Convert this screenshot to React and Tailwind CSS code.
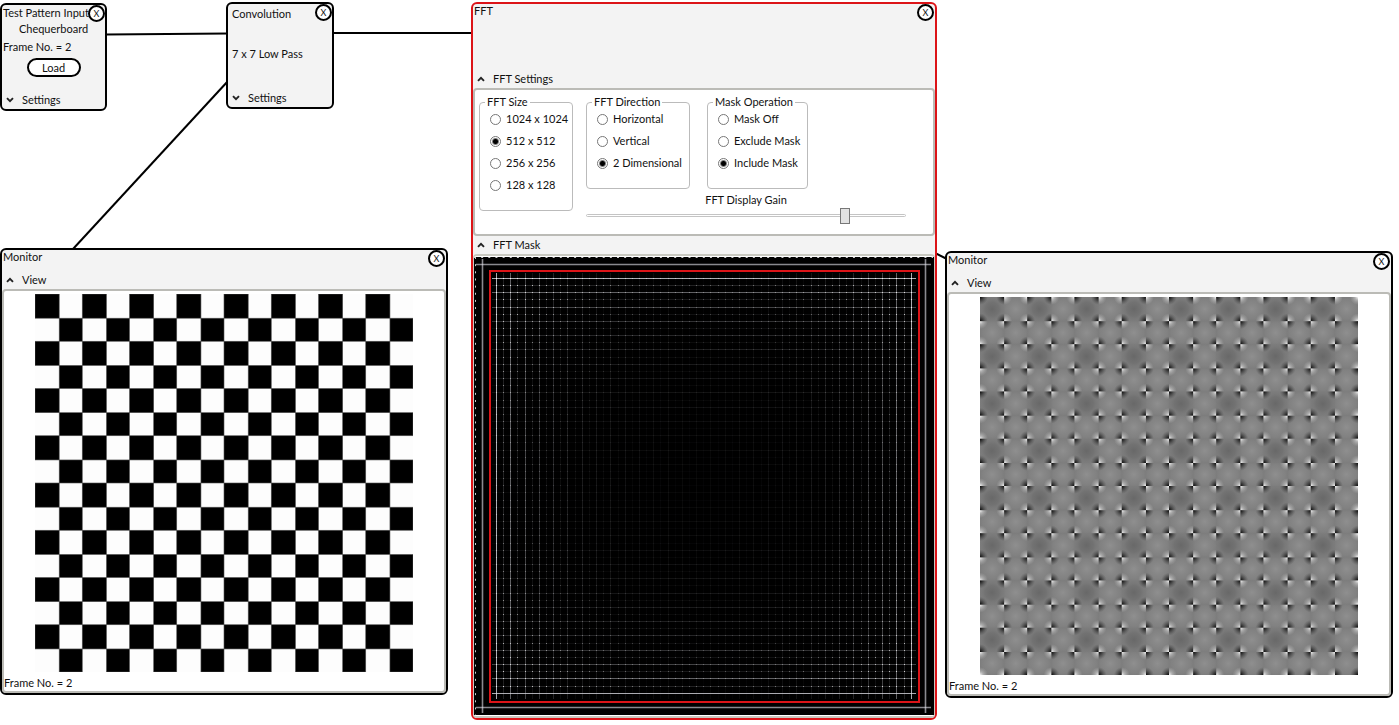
import React, { useState } from "react";

const CELLS = Array.from({ length: 16 }, (_, i) => i);
const BINS = Array.from({ length: 65 }, (_, i) => i);
const PITCH = 7.15;

// start of a board cell
const cellStart = (i) => Math.floor(i / 2) * 47.25 + (i % 2) * 24.2;

// centre of a spectrum bin, snapped to the pixel grid
const binAt = (k) => Math.floor(1 + k * PITCH) + 0.5;

const CloseButton = ({ name }) => (
  <button
    aria-label={`Close ${name}`}
    className="flex size-[17px] shrink-0 items-center justify-center rounded-full border-2 border-black bg-white text-[9px] leading-none"
  >
    X
  </button>
);

const Expander = ({ label, open, onClick }) => (
  <button
    onClick={onClick}
    aria-expanded={open}
    className="flex h-[18px] w-full shrink-0 items-center gap-2 pl-1 text-left"
  >
    <svg viewBox="0 0 8 6" className="w-2" fill="none" stroke="#222" strokeWidth="1.9">
      <path d={open ? "M1 4.8 L4 1.8 L7 4.8" : "M1 1.2 L4 4.2 L7 1.2"} />
    </svg>
    {label}
  </button>
);

const Checkerboard = () => (
  <svg viewBox="0 0 378 378" className="w-[378px]" role="img" aria-label="Chequerboard">
    <rect width="378" height="378" fill="#fdfdfd" />
    {CELLS.map((r) =>
      CELLS.filter((c) => (r + c) % 2 === 0).map((c) => (
        <rect
          key={`${r}-${c}`}
          x={cellStart(c)}
          y={cellStart(r)}
          width={cellStart(c + 1) - cellStart(c)}
          height={cellStart(r + 1) - cellStart(r)}
          fill="#000"
          stroke="#555"
          strokeWidth="0.6"
        />
      ))
    )}
  </svg>
);

const FilteredBoard = () => (
  <svg viewBox="0 0 378 378" className="w-[378px]" role="img" aria-label="Filtered chequerboard">
    <defs>
      <radialGradient id="dark">
        <stop offset="0" stopColor="#000" stopOpacity="0.95" />
        <stop offset="0.4" stopColor="#1a1a1a" stopOpacity="0.6" />
        <stop offset="1" stopColor="#444" stopOpacity="0" />
      </radialGradient>
      <radialGradient id="light">
        <stop offset="0" stopColor="#fff" stopOpacity="0.95" />
        <stop offset="0.4" stopColor="#eee" stopOpacity="0.45" />
        <stop offset="1" stopColor="#ccc" stopOpacity="0" />
      </radialGradient>
      <radialGradient id="core">
        <stop offset="0" stopColor="#666" stopOpacity="0.9" />
        <stop offset="0.5" stopColor="#6e6e6e" stopOpacity="0.7" />
        <stop offset="1" stopColor="#808080" stopOpacity="0" />
      </radialGradient>
      <radialGradient id="glow">
        <stop offset="0" stopColor="#949494" stopOpacity="0.8" />
        <stop offset="0.7" stopColor="#8a8a8a" stopOpacity="0.4" />
        <stop offset="1" stopColor="#808080" stopOpacity="0" />
      </radialGradient>
    </defs>
    <rect width="378" height="378" fill="#7c7c7c" />
    {CELLS.map((r) =>
      CELLS.map((c) => {
        const w = cellStart(c + 1) - cellStart(c);
        const h = cellStart(r + 1) - cellStart(r);
        const corner = (r + c) % 2 === 0 ? "url(#dark)" : "url(#light)";
        const centre = r % 2 === 0 && c % 2 === 0 ? "url(#core)" : "url(#glow)";
        return (
          <svg key={`${r}-${c}`} x={cellStart(c)} y={cellStart(r)} width={w} height={h}>
            <circle cx={w / 2} cy={h / 2} r="14" fill={centre} />
            <circle cx="0" cy="0" r="8" fill={corner} />
            <circle cx={w} cy="0" r="8" fill={corner} />
            <circle cx="0" cy={h} r="8" fill={corner} />
            <circle cx={w} cy={h} r="8" fill={corner} />
          </svg>
        );
      })
    )}
  </svg>
);

// brightness of a spectrum line, strongest at the outer odd bins
const lineLevel = (k) => {
  const d = Math.min(k, 64 - k);
  if (d === 0 || d === 2) return 0;
  if (d === 1) return 0.6;
  if (d === 3) return 0.75;
  return d % 2 ? 2.3 / d - 0.04 : 0.6 / d;
};

const Spectrum = () => (
  <svg viewBox="0 0 460 458" className="block w-full" role="img" aria-label="FFT spectrum">
    <defs>
      <radialGradient id="fade" gradientUnits="userSpaceOnUse" cx="230" cy="229" r="310">
        <stop offset="0" stopColor="#000" />
        <stop offset="0.4" stopColor="#0c0c0c" />
        <stop offset="0.65" stopColor="#4a4a4a" />
        <stop offset="1" stopColor="#fff" />
      </radialGradient>
      <mask id="corners">
        <rect width="460" height="458" fill="url(#fade)" />
      </mask>
    </defs>
    <rect width="460" height="458" fill="#000" />
    <g stroke="#e4e4ec">
      {BINS.map((k) => {
        const outer = k === 1 || k === 63;
        return (
          <g key={k} strokeOpacity={lineLevel(k)} strokeWidth={outer ? 1.6 : 1}>
            <line x1={binAt(k)} x2={binAt(k)} y1={outer ? 2 : 16} y2={outer ? 456 : 442} />
            <line y1={binAt(k) - 1} y2={binAt(k) - 1} x1={outer ? 2 : 18} x2={outer ? 457 : 442} />
          </g>
        );
      })}
    </g>
    <g mask="url(#corners)" fill="#fff">
      {BINS.slice(3, 61).map((r) =>
        BINS.slice(3, 62).map((c) => (
          <rect key={`${r}-${c}`} x={binAt(c) - 0.5} y={binAt(r) - 1.5} width="1" height="1" />
        ))
      )}
    </g>
    <g stroke="#ccc" strokeWidth="1" strokeDasharray="2 5.15">
      <line x1="0" x2="459" y1="0.5" y2="0.5" />
      <line x1="1.5" x2="1.5" y1="0" y2="458" />
    </g>
    <rect x="16" y="14" width="429" height="431" fill="none" stroke="#dc1418" strokeWidth="2" />
  </svg>
);

const RadioGroup = ({ legend, name, options, initial, className }) => {
  const [value, setValue] = useState(initial);

  return (
    <fieldset className={`rounded border border-[#bbb] pl-[10px] ${className}`}>
      <legend className="-ml-[5px] px-[2px] leading-4">{legend}</legend>
      <div className="mt-[2px] flex flex-col gap-2">
        {options.map((option) => (
          <label key={option} className="flex items-center gap-[5px] whitespace-nowrap">
            <input
              type="radio"
              name={name}
              checked={value === option}
              onChange={() => setValue(option)}
              className="size-[11px] shrink-0 appearance-none rounded-full border border-[#777] bg-white checked:bg-[radial-gradient(circle,#000_0_2px,#fff_4px)]"
            />
            {option}
          </label>
        ))}
      </div>
    </fieldset>
  );
};

const Monitor = ({ className, children }) => {
  const [open, setOpen] = useState(true);

  return (
    <section className={`absolute rounded-md border-2 border-black bg-[#f3f3f3] ${className}`}>
      <header className="flex h-[21px] justify-between px-px">
        <h2>Monitor</h2>
        <CloseButton name="Monitor" />
      </header>
      <Expander label="View" open={open} onClick={() => setOpen(!open)} />
      {open && (
        <div className="rounded border-2 border-[#bbbbb6] bg-white pt-[3px] pb-px">
          <div className="flex justify-center">{children}</div>
          <p className="mt-1">Frame No. = 2</p>
        </div>
      )}
    </section>
  );
};

const FftNode = () => {
  const [showSettings, setShowSettings] = useState(true);
  const [showMask, setShowMask] = useState(true);
  const [gain, setGain] = useState(82);

  return (
    <section className="absolute top-[2px] left-[471px] w-[466px] rounded-md border-2 border-[#dc1418] bg-[#f3f3f3]">
      <header className="flex h-[66px] justify-between px-px">
        <h2>FFT</h2>
        <CloseButton name="FFT" />
      </header>
      <Expander label="FFT Settings" open={showSettings} onClick={() => setShowSettings(!showSettings)} />
      {showSettings && (
        <div className="flex h-[148px] items-start gap-[13px] rounded border-2 border-[#bbbbb6] bg-white pt-1 pl-1">
          <RadioGroup
            legend="FFT Size"
            name="size"
            options={["1024 x 1024", "512 x 512", "256 x 256", "128 x 128"]}
            initial="512 x 512"
            className="h-[117px] w-[94px]"
          />
          <div>
            <div className="flex gap-[17px]">
              <RadioGroup
                legend="FFT Direction"
                name="direction"
                options={["Horizontal", "Vertical", "2 Dimensional"]}
                initial="2 Dimensional"
                className="h-[95px] w-[104px]"
              />
              <RadioGroup
                legend="Mask Operation"
                name="mask"
                options={["Mask Off", "Exclude Mask", "Include Mask"]}
                initial="Include Mask"
                className="h-[95px] w-[101px]"
              />
            </div>
            <label htmlFor="gain" className="mt-1 block text-center">
              FFT Display Gain
            </label>
            <input
              id="gain"
              type="range"
              value={gain}
              onChange={(e) => setGain(e.target.value)}
              className="block h-4 w-80 appearance-none bg-transparent [&::-webkit-slider-runnable-track]:h-[3px] [&::-webkit-slider-runnable-track]:rounded-sm [&::-webkit-slider-runnable-track]:border [&::-webkit-slider-runnable-track]:border-[#c4c4c4] [&::-webkit-slider-thumb]:-mt-[7px] [&::-webkit-slider-thumb]:h-4 [&::-webkit-slider-thumb]:w-[10px] [&::-webkit-slider-thumb]:appearance-none [&::-webkit-slider-thumb]:border [&::-webkit-slider-thumb]:border-[#777] [&::-webkit-slider-thumb]:bg-[#e2e2e2]"
            />
          </div>
        </div>
      )}
      <Expander label="FFT Mask" open={showMask} onClick={() => setShowMask(!showMask)} />
      {showMask && (
        <div className="rounded border-x border-t-2 border-b-2 border-[#c8c8c0] bg-white py-px">
          <Spectrum />
        </div>
      )}
    </section>
  );
};

const App = () => {
  return (
    <main className="relative min-h-screen overflow-hidden bg-white font-[Lato,'Open_Sans',sans-serif] text-[11px] leading-[14px] text-[#111]">
      {/* Connections between the nodes */}
      <svg className="absolute top-0 left-0" width="1399" height="725" stroke="#000" strokeWidth="2" aria-hidden="true">
        <line x1="106" y1="34.5" x2="228" y2="33.5" />
        <line x1="333" y1="33" x2="472" y2="33" />
        <line x1="73" y1="249" x2="228" y2="81" />
        <line x1="935" y1="253" x2="947" y2="259" />
      </svg>

      <section className="absolute top-[3px] left-0 flex h-[108px] w-[107px] flex-col rounded-md border-2 border-black bg-[#f3f3f3]">
        <header className="flex justify-between pl-px">
          <h2 className="min-w-0 pt-px whitespace-nowrap">Test Pattern Input</h2>
          <CloseButton name="Test Pattern Input" />
        </header>
        <p className="text-center">Chequerboard</p>
        <p className="mt-1 pl-px">Frame No. = 2</p>
        <button className="mt-1 h-[19px] w-[54px] self-center rounded-full border-2 border-black bg-white leading-none">
          Load
        </button>
        <div className="mt-auto">
          <Expander label="Settings" open={false} />
        </div>
      </section>

      <section className="absolute top-[2px] left-[226px] flex h-[107px] w-[108px] flex-col rounded-md border-2 border-black bg-[#f3f3f3]">
        <header className="flex justify-between pl-1">
          <h2 className="pt-[3px]">Convolution</h2>
          <CloseButton name="Convolution" />
        </header>
        <p className="mt-[26px] pl-1">7 x 7 Low Pass</p>
        <div className="mt-auto">
          <Expander label="Settings" open={false} />
        </div>
      </section>

      <FftNode />

      <Monitor className="top-[248px] left-0 w-[448px]">
        <Checkerboard />
      </Monitor>

      <Monitor className="top-[251px] left-[945px] w-[448px]">
        <FilteredBoard />
      </Monitor>
    </main>
  );
};

export default App;
